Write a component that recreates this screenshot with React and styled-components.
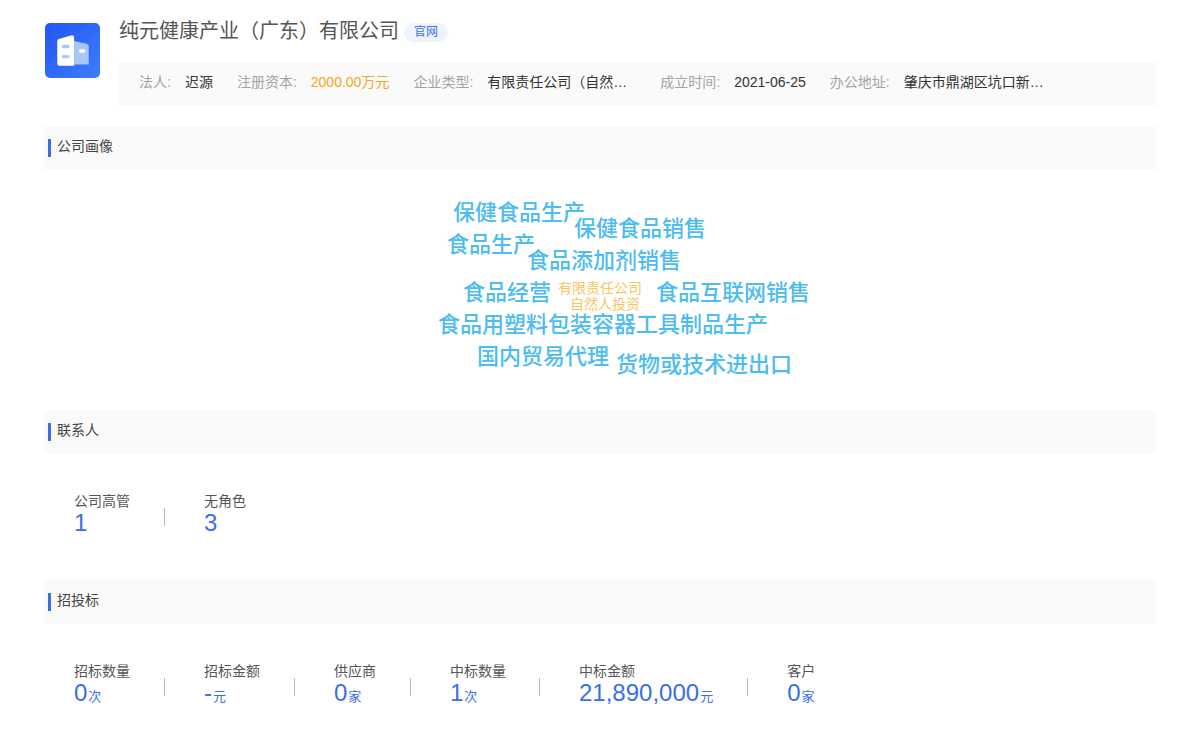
import React from 'react';
import styled, { createGlobalStyle } from 'styled-components';

const Global = createGlobalStyle`
  html, body { margin: 0; padding: 0; background: #fff; }
  body { font-family: "Liberation Sans", "Noto Sans CJK SC", sans-serif; color: #333; }
`;
const Page = styled.div`
  width: 1200px; height: 752px; box-sizing: border-box; padding: 0 44px; overflow: hidden;
`;
const Header = styled.header`
  display: flex; align-items: flex-start; height: 126px; box-sizing: border-box; padding: 23px 0 0 1px;
`;
const Logo = styled.div`
  width: 55px; height: 55px; border-radius: 5px; flex: none;
  background: linear-gradient(135deg, #2255f5, #3f7dfb);
  display: flex; align-items: center; justify-content: center;
`;
const HeaderBody = styled.div`
  margin: -4px 0 0 19px; flex: 1; min-width: 0;
`;
const TitleRow = styled.div`
  display: flex; align-items: center; height: 24px;
`;
const Title = styled.h1`
  margin: 0; font-size: 20px; font-weight: 400; color: #555; line-height: 24px; white-space: nowrap;
`;
const Tag = styled.span`
  margin: 3px 0 0 5px; height: 19px; line-height: 19px; width: 44px; text-align: center; font-size: 12px;
  color: #3a6ee8; background: #eff4fc; border-radius: 10px;
`;
const InfoBar = styled.div`
  display: flex; align-items: flex-start; height: 44px; margin-top: 19px; padding: 10px 0 0 20px; box-sizing: border-box; background: #fafafa;
`;
const InfoItem = styled.div`
  display: flex; align-items: center; margin-right: 24px; font-size: 14px; line-height: 20px; white-space: nowrap;
`;
const InfoLabel = styled.span`
  color: #a3a3a3; margin-right: 14px;
`;
const InfoValue = styled.span`
  color: ${p => (p.$accent ? '#f5a623' : '#333')};
  ${p => p.$clip && 'display: block; width: 149px;'}
`;
const SectionHead = styled.div`
  height: 44px; background: #fafafa; display: flex; align-items: flex-start; padding: 13px 0 0 4px; box-sizing: border-box;
  font-size: 14px; color: #444; line-height: 14px;
  &::before { content: ""; width: 3px; height: 18px; background: #3a6ee8; margin: 0 6px 0 0; flex: none; }
`;
const Cloud = styled.div`
  position: relative; height: 240px;
`;
const Word = styled.span`
  position: absolute; left: ${p => p.$x - 44}px; top: ${p => p.$y - 170 - 14}px;
  height: 30px; line-height: 30px; white-space: nowrap;
  font-size: ${p => (p.$small ? 14 : 22)}px;
  font-weight: ${p => (p.$small ? 400 : 500)};
  color: ${p => (p.$small ? '#f7c65f' : '#4dbcef')};
`;
const Stats = styled.div`
  display: flex; align-items: flex-start; padding: 37px 0 0 30px; height: ${p => p.$h}px; box-sizing: border-box;
`;
const Stat = styled.div`
  padding-right: 35px; margin-right: 39px; position: relative; white-space: nowrap;
  &:nth-child(4) { padding-right: 34px; }
  &:not(:last-child)::after {
    content: ""; position: absolute; right: 0; bottom: 9px; width: 1px; height: 18px; background: #bbb;
  }
`;
const StatLabel = styled.div`
  font-size: 14px; line-height: 20px; color: #555;
`;
const StatValue = styled.div`
  font-size: 24px; line-height: 24px; color: #3a6ee8; height: 24px;
`;
const Unit = styled.span`
  font-size: 13px; margin-left: 1px;
`;

const words = [
  ['保健食品生产', 453, 212], ['保健食品销售', 574, 228], ['食品生产', 447, 244],
  ['食品添加剂销售', 527, 260], ['食品经营', 463, 292], ['有限责任公司', 558, 287, true],
  ['自然人投资', 570, 303, true], ['食品互联网销售', 656, 292],
  ['食品用塑料包装容器工具制品生产', 438, 324], ['国内贸易代理', 477, 356], ['货物或技术进出口', 616, 364],
];
const info = [
  ['法人:', '迟源'], ['注册资本:', '2000.00万元', 'accent'], ['企业类型:', '有限责任公司（自然…', 'clip'],
  ['成立时间:', '2021-06-25'], ['办公地址:', '肇庆市鼎湖区坑口新…', 'clip'],
];
const contacts = [['公司高管', '1'], ['无角色', '3']];
const bids = [
  ['招标数量', '0', '次'], ['招标金额', '-', '元'], ['供应商', '0', '家'],
  ['中标数量', '1', '次'], ['中标金额', '21,890,000', '元'], ['客户', '0', '家'],
];

const BuildingIcon = () => (
  <svg width="36" height="36" viewBox="0 0 32 32">
    <path d="M17 7 L28 9.5 Q30 10 30 12 V28 H17 Z" fill="#a9c6fb" />
    <path d="M2 7 Q2 5.5 4 5 L15 2 Q17 2 17 4 V29 H4 Q2 29 2 27 Z" fill="#fff" />
    <rect x="6" y="10.5" width="7" height="3" rx="1.5" fill="#a9c6fb" />
    <rect x="6" y="19.5" width="7" height="3" rx="1.5" fill="#a9c6fb" />
    <rect x="21" y="14.5" width="6" height="3" rx="1.5" fill="#fff" />
  </svg>
);

const StatList = ({ items, h }) => (
  <Stats $h={h}>
    {items.map(([label, value, unit]) => (
      <Stat key={label}>
        <StatLabel>{label}</StatLabel>
        <StatValue>{value}{unit && <Unit>{unit}</Unit>}</StatValue>
      </Stat>
    ))}
  </Stats>
);

export default function App() {
  return (
    <Page>
      <Global />
      <Header>
        <Logo><BuildingIcon /></Logo>
        <HeaderBody>
          <TitleRow>
            <Title>纯元健康产业（广东）有限公司</Title>
            <Tag>官网</Tag>
          </TitleRow>
          <InfoBar>
            {info.map(([label, value, kind]) => (
              <InfoItem key={label}>
                <InfoLabel>{label}</InfoLabel>
                <InfoValue $accent={kind === 'accent'} $clip={kind === 'clip'}>{value}</InfoValue>
              </InfoItem>
            ))}
          </InfoBar>
        </HeaderBody>
      </Header>
      <SectionHead>公司画像</SectionHead>
      <Cloud>
        {words.map(([text, x, y, small]) => (
          <Word key={text} $x={x} $y={y} $small={small}>{text}</Word>
        ))}
      </Cloud>
      <SectionHead>联系人</SectionHead>
      <StatList items={contacts} h={126} />
      <SectionHead>招投标</SectionHead>
      <StatList items={bids} h={128} />
    </Page>
  );
}
